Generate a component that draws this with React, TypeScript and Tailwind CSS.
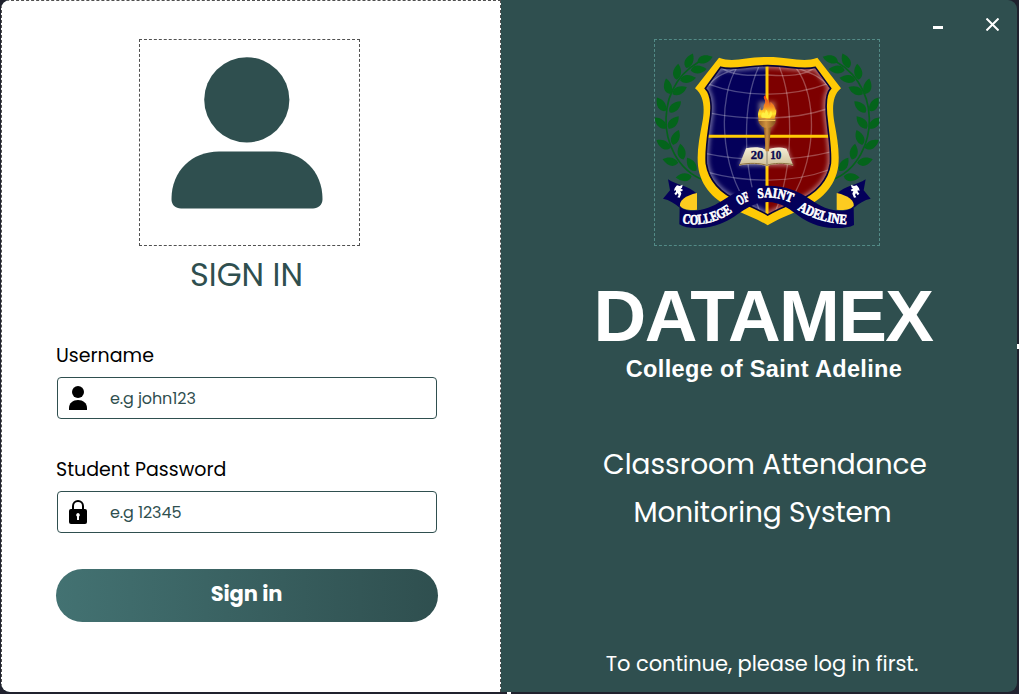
import React from "react";

const SHIELD_OUTER =
  "M207 68 C250 84 285 66 353 66 C421 66 460 84 502 68 L573 160 C545 182 547 225 553 262 C562 310 569 350 565 392 C556 456 512 498 450 525 C412 542 382 553 353 571 C324 553 294 542 256 525 C194 498 152 456 144 392 C140 350 148 310 157 262 C164 225 164 182 135 160 Z";
const SHIELD_INNER =
  "M212 97 C250 108 290 92 353 92 C416 92 456 108 496 97 L542 160 C523 180 527 225 532 262 C536 305 544 345 541 386 C532 444 492 478 440 500 C404 514 376 526 353 540 C330 526 302 514 270 500 C218 478 178 444 169 386 C166 345 173 305 179 262 C186 225 186 180 166 160 Z";

const LEAVES: [number, number, number][] = [
  [118, 78, -65], [82, 111, -84], [54, 155, -104], [34, 209, -122], [32, 264, -138],
  [41, 328, -150], [62, 379, -166], [102, 426, -184],
  [164, 73, -18], [145, 104, -4], [113, 132, -8], [88, 167, -26], [75, 216, -44],
  [70, 263, -50], [77, 308, -68], [95, 351, -100], [125, 389, -124],
];

const MOTTO = [
  { word: "COLLEGE", id: "motto-a", d: "M96 563 C150 577 207 560 249 529", length: 160 },
  { word: "OF", id: "motto-b", d: "M268 512 Q284 502 305 494", length: 37 },
  { word: "SAINT", id: "motto-c", d: "M324 490 Q375 480 428 505", length: 103 },
  { word: "ADELINE", id: "motto-d", d: "M442 523 C490 553 540 567 598 568", length: 156 },
];

function Laurel() {
  return (
    <g fill="#04641b">
      <path d="M162 436 C80 405 46 320 48 250 C50 170 95 98 172 70" fill="none" stroke="#04641b" strokeWidth="5" />
      {LEAVES.map(([x, y, r]) => (
        <path key={`${x}-${y}`} d="M-23 1 C-16 -17 6 -17 25 0 C9 15 -12 15 -23 1 Z" transform={`translate(${x} ${y}) rotate(${r})`} />
      ))}
    </g>
  );
}

function RibbonEnd() {
  return (
    <g>
      <path d="M54 433 C80 450 115 452 141 476 C105 485 88 500 89 518 C75 505 58 495 39 491 L60 466 Z" fill="#04005a" />
      <path d="M141 474 C105 482 88 497 90 512 C98 524 120 526 141 524 Z" fill="#fccb20" />
      <path d="M76 457 L81 451 L89 453 L98 449 L96 458 L92 461 L99 464 L96 469 L91 468 L94 476 L89 488 L82 487 L86 480 L83 474 L78 481 L73 476 L78 470 L78 466 L72 467 L74 460 Z" fill="#fff" />
    </g>
  );
}

function Crest() {
  return (
    <svg viewBox="15 15 672 615" className="block h-full w-full">
      <defs>
        <clipPath id="shield"><path d={SHIELD_INNER} /></clipPath>
        <filter id="soft" x="-20%" y="-20%" width="140%" height="140%"><feGaussianBlur stdDeviation="6" /></filter>
        <linearGradient id="flame" x1="0" y1="0" x2="0" y2="1">
          <stop offset="0" stopColor="#e53517" /><stop offset=".5" stopColor="#f58a20" /><stop offset=".8" stopColor="#ffe52d" /><stop offset="1" stopColor="#e8961c" />
        </linearGradient>
        <linearGradient id="torch"><stop offset="0" stopColor="#8b5520" /><stop offset=".45" stopColor="#d0923f" /><stop offset="1" stopColor="#80501e" /></linearGradient>
        <linearGradient id="page" x1="0" y1="0" x2="0" y2="1"><stop offset="0" stopColor="#f5efd9" /><stop offset="1" stopColor="#cdbd94" /></linearGradient>
        {MOTTO.map((m) => <path key={m.id} id={m.id} d={m.d} />)}
      </defs>
      <Laurel />
      <g transform="translate(706 0) scale(-1 1)"><Laurel /></g>
      <path d={SHIELD_OUTER} fill="#ffca05" />
      <g clipPath="url(#shield)">
        <path d="M150 80 H353 V550 H150 Z" fill="#04005a" />
        <path d="M353 80 H560 V550 H353 Z" fill="#7d0000" />
        <path d={SHIELD_INNER} fill="none" stroke="#fff" strokeOpacity=".45" strokeWidth="16" filter="url(#soft)" />
        <g fill="none" stroke="#fff" strokeOpacity=".28" strokeWidth="4">
          <path d="M262 96 C205 180 205 390 300 520 M326 96 C278 200 275 400 330 530 M388 96 C432 200 430 400 376 530 M436 96 C505 180 505 390 405 520" />
          <path d="M178 148 C290 190 430 185 535 145 M185 235 C290 256 430 256 530 222 M165 355 C280 380 430 380 545 350 M175 412 C290 444 430 444 535 405" />
          <path d="M212 97 C250 124 300 122 353 120 C420 125 460 122 496 97 M176 152 C195 122 230 112 270 96 M534 152 C510 122 476 112 436 96" />
        </g>
        <path d="M351 85 V545 M165 304 H545" stroke="#ffca05" strokeWidth="9" fill="none" />
      </g>
      <path d={SHIELD_INNER} fill="none" stroke="#07043a" strokeWidth="5" />
      <g filter="url(#soft)" opacity=".45">
        <path d="M288 338 H412 L430 392 H266 Z" fill="#fff" />
        <path d="M326 200 H376 V262 L360 290 H344 L326 262 Z" fill="#fff0b0" />
      </g>
      <path d="M288 340 C318 334 340 338 350 346 C364 336 392 336 410 341 L430 392 C398 384 370 386 350 394 C328 386 300 386 267 392 Z" fill="url(#page)" />
      <path d="M267 389 C300 383 330 384 350 391 C370 384 400 383 430 389" fill="none" stroke="#8c7040" strokeWidth="3" />
      <path d="M351 347 V391" stroke="#a39a80" strokeWidth="4" />
      <path d="M341 270 H363 L357 349 H347 Z" fill="url(#torch)" />
      <path d="M324 252 H378 C378 265 369 275 359 278 H343 C333 274 325 265 324 252 Z" fill="url(#torch)" />
      <path d="M326 256 H376" stroke="#eebd5b" strokeWidth="4" />
      <path d="M326 251 C321 236 326 226 332 215 C328 230 340 228 341 217 C339 206 350 205 344 194 C339 187 341 182 348 179 C344 194 361 194 359 213 C362 209 360 204 362 200 C369 209 376 211 375 226 C379 220 376 219 377 217 C382 235 376 241 374 251 Z" fill="url(#flame)" />
      <path d="M335 248 C331 239 337 236 339 231 C343 240 348 229 347 223 C355 229 353 235 356 241 C361 235 360 231 363 227 C369 239 364 245 360 250 Z" fill="#fff044" />
      <g fill="#090750" stroke="#090750" strokeWidth="1" fontFamily="Liberation Serif, serif" fontWeight="700" fontSize="36">
        <text x="302" y="373" textLength="38" lengthAdjust="spacingAndGlyphs">20</text>
        <text x="361" y="373" textLength="33" lengthAdjust="spacingAndGlyphs">10</text>
      </g>
      <path d="M89 512 C98 525 120 530 150 525 C225 512 240 454 353 452 C466 454 477 510 550 525 C580 530 602 525 611 512 L612 570 C595 579 568 581 535 578 C438 566 430 503 353 501 C276 503 262 565 165 578 C132 581 105 579 88 568 Z" fill="#04005a" />
      <RibbonEnd />
      <g transform="translate(701 0) scale(-1 1)"><RibbonEnd /></g>
      <g fill="#fff" stroke="#fff" strokeWidth="2" fontFamily="Liberation Serif, serif" fontWeight="700" fontSize="42">
        {MOTTO.map((m) => (
          <text key={m.id} textLength={m.length} lengthAdjust="spacingAndGlyphs">
            <textPath href={`#${m.id}`} textLength={m.length} lengthAdjust="spacingAndGlyphs">{m.word}</textPath>
          </text>
        ))}
      </g>
    </svg>
  );
}

function PersonIcon() {
  return (
    <svg viewBox="0 0 18 24" className="h-6 w-[18px] shrink-0">
      <circle cx="9" cy="6" r="6" />
      <path d="M0 24 V22 C0 17 4 14 9 14 S18 17 18 22 V24 Z" />
    </svg>
  );
}

function LockIcon() {
  return (
    <svg viewBox="0 0 18 24" className="h-6 w-[18px] shrink-0">
      <path d="M4 11 V6 A5 5 0 0 1 14 6 V11" fill="none" stroke="#000" strokeWidth="2" />
      <rect y="9" width="18" height="15" rx="2" />
      <path d="M9 13 A2 2 0 0 1 10 16.6 V20 H8 V16.6 A2 2 0 0 1 9 13 Z" fill="#fff" />
    </svg>
  );
}

type FieldProps = { label: string; hint: string; icon: React.ReactNode };

function Field({ label, hint, icon }: FieldProps) {
  return (
    <div className="w-[380px]">
      <div className="-ml-px h-[34px] text-[19px] leading-[25px] whitespace-nowrap text-black">{label}</div>
      <div className="flex h-[42px] items-center rounded-[4px] border border-[#2f4f4f] pl-[11px]">
        {icon}
        <span className="ml-[23px] pt-px text-[16px] tracking-[-0.1px] whitespace-nowrap text-[#2f4f4f]">{hint}</span>
      </div>
    </div>
  );
}

export default function App() {
  return (
    <div className="relative h-[694px] w-[1019px] overflow-hidden bg-[#20222e] pl-px pr-[2px] pb-[2px] font-['Poppins','Inter',sans-serif]">
      <div className="flex h-[692px] w-[1016px] overflow-hidden rounded-[9px] bg-[#2f4f4f]">
        <main className="flex w-[500px] shrink-0 flex-col items-start border border-b-0 border-dashed border-[#505050] bg-white">
          <div className="mt-[38px] ml-[137px] h-[207px] w-[221px] border border-dashed border-[#505050]">
            <svg viewBox="140 40 219 205" className="h-full w-full fill-[#2f4f4f]">
              <circle cx="246.8" cy="99.8" r="42.6" />
              <path d="M219 151.6 H275 C302 151.6 322.5 171 322.5 199 C322.5 205 318 208.5 313 208.5 H181 C175.500 208.500 171.500 205 171.500 199 C171.500 171 192 151.600 219 151.600 Z" />
            </svg>
          </div>
          <h1 className="mt-[9px] ml-[188px] h-[40px] text-[32px] leading-[40px] font-normal whitespace-nowrap text-[#2f4f4f]">SIGN IN</h1>
          <div className="mt-[48px] ml-[55px] flex flex-col gap-[38px]">
            <Field label="Username" hint="e.g john123" icon={<PersonIcon />} />
            <Field label="Student Password" hint="e.g 12345" icon={<LockIcon />} />
          </div>
          <button className="mt-[36px] ml-[54px] flex h-[53px] w-[382px] items-center justify-center rounded-full bg-linear-to-r from-[#437272] to-[#2f4f4f] pr-px pb-[3px] text-[21px] font-bold tracking-[-0.1px] text-white">Sign in</button>
        </main>
        <section className="flex min-w-0 flex-1 flex-col items-center text-white">
          <div className="flex h-[39px] w-full justify-end gap-[43px] pt-[18px] pr-[18px]">
            <svg viewBox="0 0 10 13" className="h-[13px] w-[10px]"><path d="M0 8 H10 V11 H0 Z" fill="#fff" /></svg>
            <svg viewBox="0 0 13 13" className="h-[13px] w-[13px]"><path d="M.5 .5 L12.500 12.500 M12.500 .5 L.5 12.500" stroke="#fff" strokeWidth="2" /></svg>
          </div>
          <div className="mr-[-16px] h-[207px] w-[226px] border border-dashed border-[#538b87]"><Crest /></div>
          <div className="mt-[34px] mr-[-8px] h-[72px] font-['Liberation_Sans',sans-serif] text-[73px] leading-[72px] font-bold tracking-[-1.6px] whitespace-nowrap">DATAMEX</div>
          <div className="mt-[3px] mr-[-10px] h-[28px] font-['Liberation_Sans',sans-serif] text-[23.5px] leading-[28px] font-bold tracking-[0.35px] whitespace-nowrap">College of Saint Adeline</div>
          <div className="mt-[58px] mr-[-12px] h-[48px] text-[28px] leading-[48px] whitespace-nowrap">Classroom Attendance</div>
          <div className="mr-[-7px] h-[48px] text-[28px] leading-[48px] tracking-[-0.1px] whitespace-nowrap">Monitoring System</div>
          <div className="mt-[111px] mr-[-6px] h-[32px] text-[21px] leading-[32px] tracking-[-0.05px] whitespace-nowrap">To continue, please log in first.</div>
        </section>
      </div>
      <span className="absolute top-[344px] right-0 h-[5px] w-[2px] bg-white" />
      <span className="absolute bottom-0 left-[507px] h-[2px] w-[4px] bg-white" />
    </div>
  );
}
